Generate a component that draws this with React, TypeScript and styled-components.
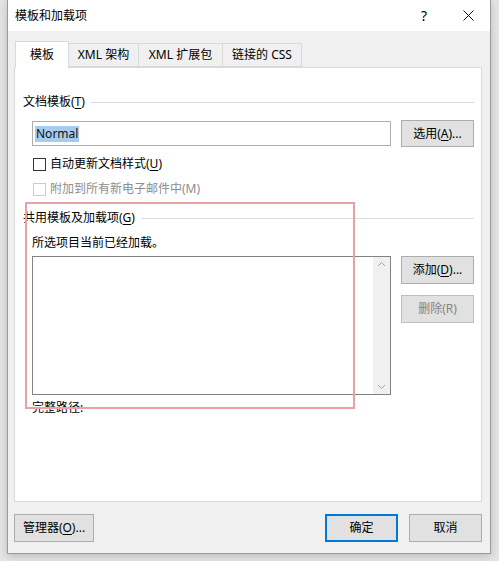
import React from "react";
import styled, { createGlobalStyle } from "styled-components";

const GlobalStyle = createGlobalStyle`
  html, body {
    margin: 0;
    padding: 0;
  }
  body {
    font-family: "Noto Sans", "Noto Sans CJK SC", sans-serif;
    font-size: 12px;
    color: #000;
  }
`;

const Screen = styled.div`
  position: relative;
  width: 499px;
  height: 561px;
  background: #e4e4e4;
  padding-left: 7px;
  box-sizing: border-box;
  overflow: hidden;
`;

const Dialog = styled.div`
  width: 484px;
  height: 554px;
  box-sizing: border-box;
  background: #f0f0f0;
  border: 1px solid #9a9a9a;
  border-top: none;
  box-shadow: 0 2px 8px rgba(0, 0, 0, 0.18);
  display: flex;
  flex-direction: column;
`;

const TitleBar = styled.div`
  height: 31px;
  background: #fff;
  display: flex;
  align-items: center;
  padding-left: 7px;
`;

const Title = styled.span`
  flex: 1;
  line-height: 16px;
`;

const TitleButton = styled.div`
  width: 44px;
  height: 31px;
  display: flex;
  align-items: center;
  justify-content: center;
  font-size: 14px;
`;

const Body = styled.div`
  padding: 10px 8px 0 6px;
  display: flex;
  flex-direction: column;
`;

const TabStrip = styled.div`
  display: flex;
  align-items: flex-end;
  height: 26px;
  margin-left: 1px;
  position: relative;
  z-index: 1;
`;

const Tab = styled.div<{ $active?: boolean; $w: number }>`
  width: ${(p) => p.$w}px;
  height: ${(p) => (p.$active ? 27 : 24)}px;
  margin-bottom: ${(p) => (p.$active ? -1 : 0)}px;
  box-sizing: border-box;
  border: 1px solid #d9d9d9;
  border-bottom: ${(p) => (p.$active ? "none" : "1px solid #d9d9d9")};
  border-left: ${(p) => (p.$active ? "1px solid #d9d9d9" : "none")};
  background: ${(p) => (p.$active ? "#fff" : "#f0f0f0")};
  display: flex;
  align-items: center;
  justify-content: center;
  line-height: 16px;
  padding-bottom: ${(p) => (p.$active ? 1 : 0)}px;
`;

const Panel = styled.div`
  height: 435px;
  box-sizing: border-box;
  border: 1px solid #d9d9d9;
  background: #fff;
  padding: 0 7px 0 8px;
  display: flex;
  flex-direction: column;
`;

const GroupHeader = styled.div<{ $top: number }>`
  display: flex;
  align-items: center;
  gap: 6px;
  height: 16px;
  line-height: 16px;
  margin-top: ${(p) => p.$top}px;
`;

const Rule = styled.div`
  flex: 1;
  height: 1px;
  background: #dcdcdc;
`;

const U = styled.span`
  text-decoration: underline;
  text-underline-offset: 2px;
`;

const FieldRow = styled.div`
  display: flex;
  align-items: center;
  gap: 10px;
  margin: 10px 0 0 9px;
`;

const TextField = styled.div`
  flex: 1;
  height: 25px;
  box-sizing: border-box;
  border: 1px solid #adadad;
  display: flex;
  align-items: center;
  padding-left: 2px;
`;

const Selected = styled.span`
  background: #a6cbef;
  line-height: 16px;
  padding: 0 1px;
  color: #111;
`;

const Button = styled.div<{ $w?: number; $h?: number; $disabled?: boolean; $default?: boolean }>`
  width: ${(p) => p.$w ?? 73}px;
  height: ${(p) => p.$h ?? 27}px;
  box-sizing: border-box;
  background: #e1e1e1;
  border: ${(p) =>
    p.$default ? "2px solid #0078d7" : p.$disabled ? "1px solid #bfbfbf" : "1px solid #adadad"};
  color: ${(p) => (p.$disabled ? "#838383" : "#000")};
  display: flex;
  align-items: center;
  justify-content: center;
  line-height: 16px;
  flex-shrink: 0;
`;

const CheckRow = styled.div<{ $top: number; $disabled?: boolean }>`
  display: flex;
  align-items: center;
  gap: 4px;
  height: 16px;
  line-height: 16px;
  margin: ${(p) => p.$top}px 0 0 10px;
  color: ${(p) => (p.$disabled ? "#8d8d8d" : "#000")};
`;

const Box = styled.div<{ $disabled?: boolean }>`
  width: 13px;
  height: 13px;
  box-sizing: border-box;
  border: 1px solid ${(p) => (p.$disabled ? "#cccccc" : "#333")};
  background: #fff;
`;

const Caption = styled.div<{ $top: number }>`
  height: 16px;
  line-height: 16px;
  margin: ${(p) => p.$top}px 0 0 9px;
`;

const ListRow = styled.div`
  display: flex;
  gap: 10px;
  margin: 5px 0 0 9px;
`;

const ListBox = styled.div`
  flex: 1;
  height: 139px;
  box-sizing: border-box;
  border: 1px solid #828282;
  display: flex;
  justify-content: flex-end;
`;

const ScrollTrack = styled.div`
  width: 17px;
  background: #f0f0f0;
  display: flex;
  flex-direction: column;
  justify-content: space-between;
  align-items: center;
  padding: 4px 0;
`;

const SideButtons = styled.div`
  display: flex;
  flex-direction: column;
  gap: 11px;
`;

const Footer = styled.div`
  display: flex;
  align-items: center;
  gap: 11px;
  margin-top: 12px;
`;

const Spacer = styled.div`
  flex: 1;
`;

const Annotation = styled.div`
  position: absolute;
  left: 25px;
  top: 202px;
  width: 330px;
  height: 207px;
  box-sizing: border-box;
  border: 2px solid #e8a2a5;
  pointer-events: none;
`;

const Chevron = ({ up }: { up?: boolean }) => (
  <svg width="9" height="6" viewBox="0 0 9 6">
    <path
      d={up ? "M1 5 L4.5 1.5 L8 5" : "M1 1 L4.5 4.5 L8 1"}
      fill="none"
      stroke="#a3a3a3"
      strokeWidth="1"
    />
  </svg>
);

export default function App() {
  return (
    <>
      <GlobalStyle />
      <Screen>
        <Dialog>
          <TitleBar>
            <Title>模板和加载项</Title>
            <TitleButton>?</TitleButton>
            <TitleButton>
              <svg width="11" height="11" viewBox="0 0 11 11">
                <path d="M0.5 0.5 L10.5 10.5 M10.5 0.5 L0.5 10.5" stroke="#111" strokeWidth="1" />
              </svg>
            </TitleButton>
          </TitleBar>
          <Body>
            <TabStrip>
              <Tab $active $w={54}>模板</Tab>
              <Tab $w={70}>XML 架构</Tab>
              <Tab $w={84}>XML 扩展包</Tab>
              <Tab $w={79}>链接的 CSS</Tab>
            </TabStrip>
            <Panel>
              <GroupHeader $top={26}>
                <span>
                  文档模板(<U>T</U>)
                </span>
                <Rule />
              </GroupHeader>
              <FieldRow>
                <TextField>
                  <Selected>Normal</Selected>
                </TextField>
                <Button>
                  选用(<U>A</U>)...
                </Button>
              </FieldRow>
              <CheckRow $top={9}>
                <Box />
                <span>
                  自动更新文档样式(<U>U</U>)
                </span>
              </CheckRow>
              <CheckRow $top={9} $disabled>
                <Box $disabled />
                <span>附加到所有新电子邮件中(M)</span>
              </CheckRow>
              <GroupHeader $top={13}>
                <span>
                  共用模板及加载项(<U>G</U>)
                </span>
                <Rule />
              </GroupHeader>
              <Caption $top={9}>所选项目当前已经加载。</Caption>
              <ListRow>
                <ListBox>
                  <ScrollTrack>
                    <Chevron up />
                    <Chevron />
                  </ScrollTrack>
                </ListBox>
                <SideButtons>
                  <Button $h={28}>
                    添加(<U>D</U>)...
                  </Button>
                  <Button $h={28} $disabled>
                    删除(R)
                  </Button>
                </SideButtons>
              </ListRow>
              <Caption $top={5}>完整路径:</Caption>
            </Panel>
            <Footer>
              <Button $w={80} $h={28}>
                管理器(<U>O</U>)...
              </Button>
              <Spacer />
              <Button $h={28} $default>
                确定
              </Button>
              <Button $h={28}>取消</Button>
            </Footer>
          </Body>
        </Dialog>
        <Annotation />
      </Screen>
    </>
  );
}
